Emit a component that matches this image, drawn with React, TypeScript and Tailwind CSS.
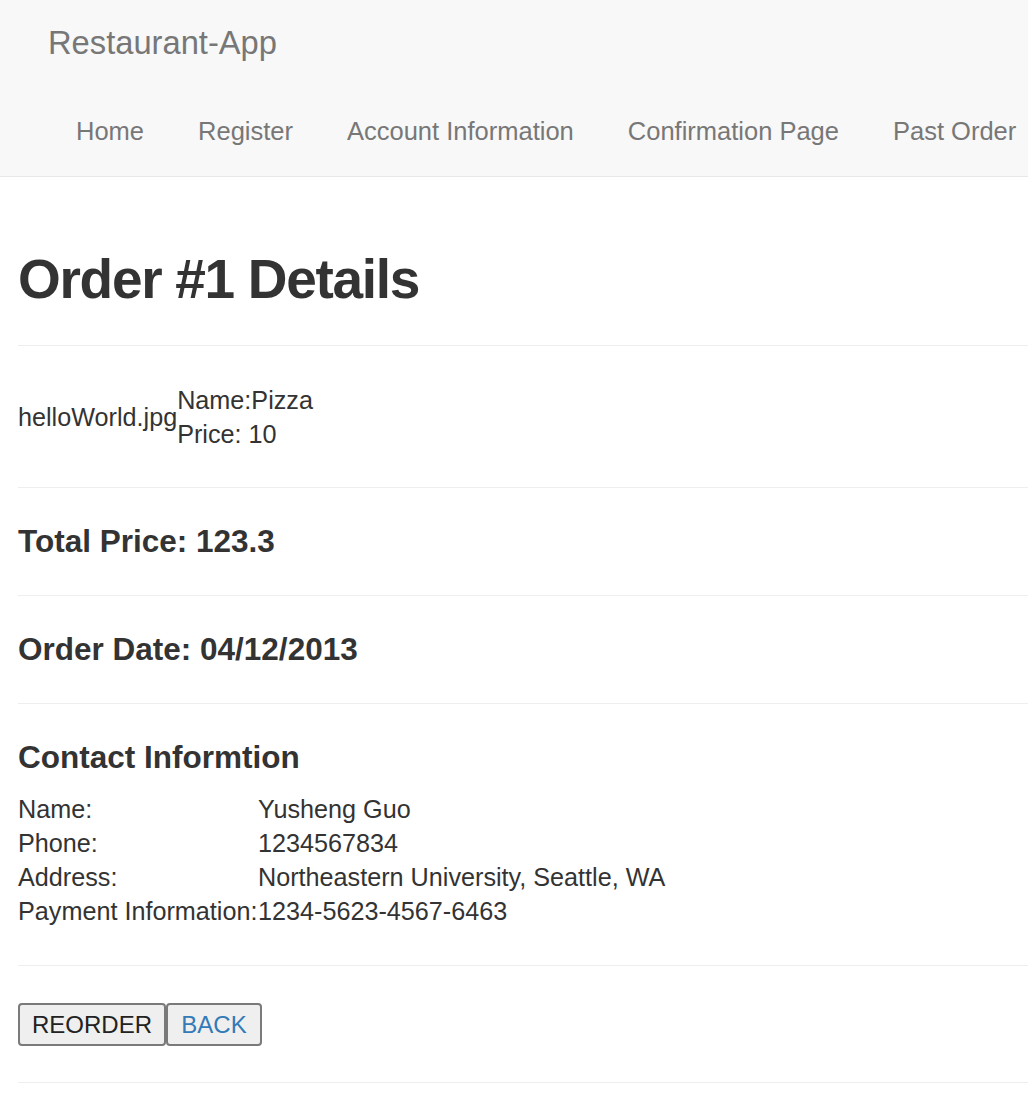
import React from 'react'

const navLinks = ['Home', 'Register', 'Account Information', 'Confirmation Page', 'Past Order']

const contact = [
  { label: 'Name:', value: 'Yusheng Guo' },
  { label: 'Phone:', value: '1234567834' },
  { label: 'Address:', value: 'Northeastern University, Seattle, WA' },
  { label: 'Payment Information:', value: '1234-5623-4567-6463' },
]

function Divider({ className = '' }: { className?: string }) {
  return <div className={`h-px bg-[#eeeeee] ${className}`} />
}

export default function App() {
  return (
    <div className="min-h-[1098px] overflow-hidden bg-white text-[#333333] font-['Liberation_Sans',Arial,sans-serif]">
      {/* navbar */}
      <nav className="bg-[#f8f8f8] border-b border-[#e7e7e7]">
        <div className="h-[86px] flex items-center pl-[48px]">
          <a className="text-[32.7px] leading-[34px] text-[#777777]">Restaurant-App</a>
        </div>
        <ul className="h-[90px] flex items-center pl-[49px] whitespace-nowrap">
          {navLinks.map((link) => (
            <li key={link} className="shrink-0 px-[27px] text-[25.5px] leading-[34px] text-[#777777]">
              {link}
            </li>
          ))}
        </ul>
      </nav>

      <main className="pl-[18px]">
        <h1 className="mt-[69px] text-[55px] leading-[66px] font-bold tracking-[-1.3px]">Order #1 Details</h1>
        <Divider className="mt-[33px]" />

        <div className="mt-[37px] flex items-center text-[25.2px] leading-[34px]">
          <span>helloWorld.jpg</span>
          <div>
            <div>Name:Pizza</div>
            <div>Price: 10</div>
          </div>
        </div>
        <Divider className="mt-[36px]" />

        <h4 className="mt-[31px] text-[31.5px] leading-[44px] font-bold">Total Price: 123.3</h4>
        <Divider className="mt-[32px]" />

        <h4 className="mt-[31px] text-[31.5px] leading-[44px] font-bold">Order Date: 04/12/2013</h4>
        <Divider className="mt-[32px]" />

        <h3 className="mt-[31px] text-[31.5px] leading-[44px] font-bold">Contact Informtion</h3>
        <div className="mt-[13px] grid grid-cols-[240px_1fr] text-[25.2px] leading-[34px]">
          {contact.map((row) => (
            <React.Fragment key={row.label}>
              <div className="whitespace-nowrap">{row.label}</div>
              <div>{row.value}</div>
            </React.Fragment>
          ))}
        </div>
        <Divider className="mt-[37px]" />

        <div className="mt-[37px] flex">
          <button className="w-[148px] h-[43px] bg-[#efefef] border-2 border-[#7a7a7a] rounded-[4px] text-[24px] text-[#222222]">
            REORDER
          </button>
          <button className="w-[96px] h-[43px] bg-[#efefef] border-2 border-[#7a7a7a] rounded-[4px] text-[24px] text-[#337ab7]">
            BACK
          </button>
        </div>
        <Divider className="mt-[36px]" />
      </main>
    </div>
  )
}
